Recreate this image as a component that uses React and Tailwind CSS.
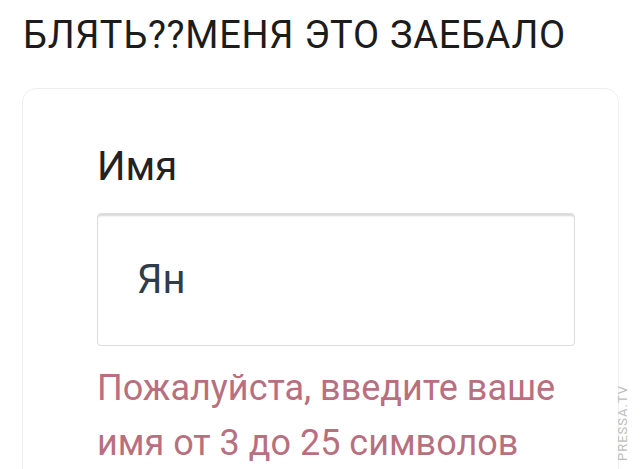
import React from 'react';

const NameField = ({ value, error }) => (
  <div className="flex flex-col">
    <label className="text-[40px] leading-[40px] text-[#222222]">Имя</label>
    <div className="mt-[26px] flex h-[133px] w-[478px] items-center rounded-[4px] border border-[#dedede] bg-white pl-[39px] shadow-[inset_0_3px_2px_-1px_rgba(0,0,0,0.16)]">
      <span className="text-[40px] leading-none text-[#2e3d49]">{value}</span>
    </div>
    {error && (
      <p className="mt-[15px] w-[490px] text-[36px] leading-[55px] text-[#b8707f]">
        Пожалуйста, введите ваше
        <br />
        имя от 3 до 25 символов
      </p>
    )}
  </div>
);

const App = () => {
  return (
    <div className="relative h-[469px] w-[640px] overflow-hidden bg-white font-['Roboto',sans-serif]">
      <h1 className="pl-[23px] pt-[16px] text-[38px] leading-[38px] tracking-[0.7px] text-[#1c1c1c]">
        БЛЯТЬ??МЕНЯ ЭТО ЗАЕБАЛО
      </h1>

      <div className="ml-[22px] mt-[34px] h-[420px] w-[597px] rounded-[14px] border border-[#efefef] bg-white pl-[74px] pt-[58px]">
        <NameField value="Ян" error />
      </div>

      <span className="absolute left-[622px] top-[423px] -translate-x-1/2 -translate-y-1/2 -rotate-90 whitespace-nowrap text-[13px] leading-none tracking-[1px] text-[#bdbdbd]">
        PRESSA.TV
      </span>
    </div>
  );
};

export default App;
